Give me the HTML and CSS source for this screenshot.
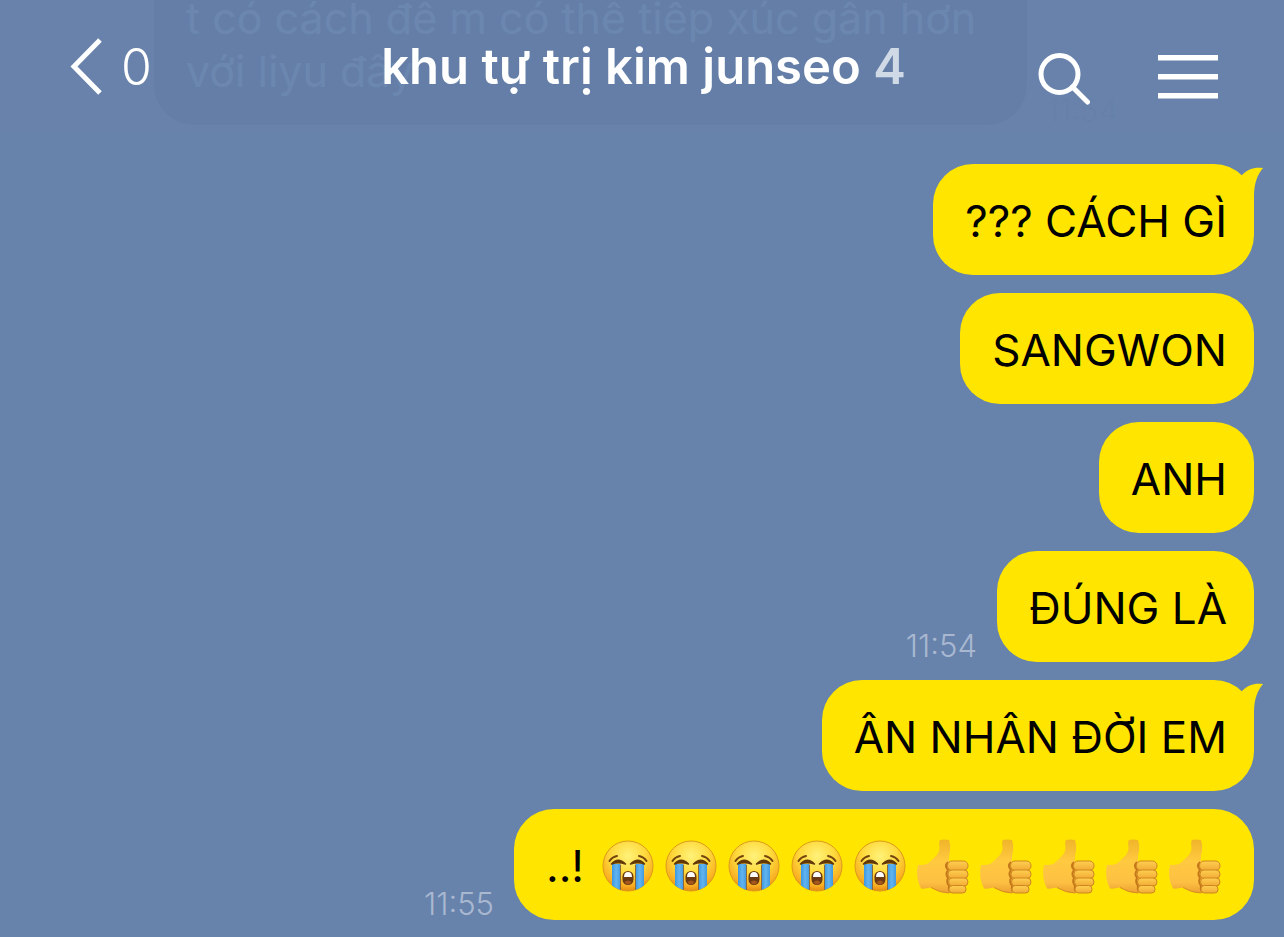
FILE: index.html
```html
<!DOCTYPE html>
<html lang="vi">
<head>
    <meta charset="UTF-8">
    <meta name="viewport" content="width=device-width, initial-scale=1.0">
    <title>khu tự trị kim junseo</title>
    <link rel="stylesheet" href="styles.css">
</head>
<body>
    <!-- shared shapes -->
    <svg class="defs" aria-hidden="true">
        <defs>
            <radialGradient id="faceFill" cx="0.5" cy="0.3" r="0.7">
                <stop offset="0" stop-color="#fff27a"/>
                <stop offset="0.5" stop-color="#ffd93b"/>
                <stop offset="0.85" stop-color="#f8ae22"/>
                <stop offset="1" stop-color="#e68a12"/>
            </radialGradient>
            <linearGradient id="tearFill" x1="0" y1="0" x2="1" y2="0">
                <stop offset="0" stop-color="#3c98e0"/>
                <stop offset="0.5" stop-color="#62b4f0"/>
                <stop offset="1" stop-color="#4199de"/>
            </linearGradient>
            <linearGradient id="handFill" x1="0" y1="0" x2="0" y2="1">
                <stop offset="0" stop-color="#f0b429"/>
                <stop offset="0.4" stop-color="#ffc940"/>
                <stop offset="0.8" stop-color="#fdc043"/>
                <stop offset="1" stop-color="#eda032"/>
            </linearGradient>
            <linearGradient id="fingerFill" x1="0" y1="0" x2="0" y2="1">
                <stop offset="0" stop-color="#ffcf52"/>
                <stop offset="1" stop-color="#f1ab35"/>
            </linearGradient>
            <symbol id="tail" viewBox="0 0 40 44">
                <path d="M19 11 C25 5 31 3 40 4 C34 11 31 20 31 32 L31 44 L8 44 L8 20 Z"/>
            </symbol>
            <symbol id="cry" viewBox="0 0 63 53">
                <circle cx="29" cy="26" r="25" fill="url(#faceFill)" stroke="#dd9a1c" stroke-width="1"/>
                <path d="M13 24 H21.500 V50 Q17 48.500 13 45.500 Z" fill="url(#tearFill)"/>
                <path d="M36.500 24 H45 V45.500 Q41 48.500 36.500 50 Z" fill="url(#tearFill)"/>
                <path d="M21.500 25 V50 M36.500 25 V50" stroke="#8a6a3c" stroke-width="1" fill="none"/>
                <path d="M10.500 21 Q13 17 18 16 M40 16 Q45 17 47.500 21" stroke="#75450f" stroke-width="2" stroke-linecap="round" fill="none"/>
                <path d="M12.500 24 Q19 16.500 26.500 24 Q19 21.500 12.500 24 Z M31.500 24 Q39 16.500 45.500 24 Q39 21.500 31.500 24 Z" fill="#633808" stroke="#633808" stroke-width="1.500" stroke-linejoin="round"/>
                <rect x="23.500" y="31" width="11" height="14" rx="5.500" fill="#6b3a12"/>
                <path d="M25 37 Q25 32 29 32 Q33 32 33 37 Z" fill="#fff"/>
                <path d="M25.500 42 Q29 39 32.500 42 Q31 44.500 29 44.500 Q27 44.500 25.500 42 Z" fill="#a5571d"/>
            </symbol>
            <symbol id="thumb" viewBox="0 0 63 53">
                <path d="M4 25 Q9 25.500 14 23.500 Q18 20 21 17 Q26 12 25.500 7 Q24.500 2 26 0 Q30 -1 35 0 Q37 5 36 11 Q34.500 16 35 21 L40 49 Q39 53 34 53 Q28 53 24 51 L17 47.500 Q11 49 7 48.500 Q1 37 4 25 Z" fill="url(#handFill)"/>
                <path d="M34 22 Q30 26 34 30 Q31 34 34 38 Q32 42 35 46 Q34 49 36 52" stroke="#c5781a" stroke-width="2" fill="none"/>
                <path d="M17 47.500 Q25 52.500 35 53" stroke="#d88b22" stroke-width="1" fill="none"/>
                <g fill="url(#fingerFill)" stroke="#cf861f" stroke-width="1">
                    <rect x="33.500" y="21" width="20.500" height="9.500" rx="4.500"/>
                    <rect x="34" y="30" width="20" height="8.500" rx="4"/>
                    <rect x="34.500" y="38" width="19.500" height="8" rx="4"/>
                    <rect x="35" y="45.500" width="17" height="7.500" rx="3.500"/>
                </g>
            </symbol>
        </defs>
    </svg>

    <header>
        <button type="button" class="back" aria-label="Back">
            <svg width="34" height="58" viewBox="0 0 34 58">
                <path d="M31 2 L5 28.500 L31 55" fill="none" stroke="currentColor" stroke-width="5"/>
            </svg>
            <span>0</span>
        </button>
        <h1>khu tự trị kim junseo <span class="members">4</span></h1>
        <div class="actions">
            <button type="button" aria-label="Search">
                <svg width="54" height="54" viewBox="0 0 54 54" fill="none" stroke="currentColor" stroke-width="5">
                    <circle cx="22.500" cy="23" r="18.500"/>
                    <path d="M35.500 36 L50.500 51" stroke-linecap="round"/>
                </svg>
            </button>
            <button type="button" aria-label="Menu">
                <svg width="60" height="46" viewBox="0 0 60 46" fill="currentColor">
                    <rect y="0" width="60" height="5.500"/>
                    <rect y="19" width="60" height="5.500"/>
                    <rect y="38" width="60" height="5.500"/>
                </svg>
            </button>
        </div>
    </header>

    <main class="chat">
        <div class="message received">
            <p class="bubble">t có cách để m có thể tiếp xúc gần hơn với liyu đây</p>
            <time>11:54</time>
        </div>
        <div class="message sent">
            <p class="bubble">??? CÁCH GÌ<svg class="tail" aria-hidden="true"><use href="#tail"/></svg></p>
        </div>
        <div class="message sent">
            <p class="bubble">SANGWON</p>
        </div>
        <div class="message sent">
            <p class="bubble">ANH</p>
        </div>
        <div class="message sent">
            <time>11:54</time>
            <p class="bubble">ĐÚNG LÀ</p>
        </div>
        <div class="message sent">
            <p class="bubble">ÂN NHÂN ĐỜI EM<svg class="tail" aria-hidden="true"><use href="#tail"/></svg></p>
        </div>
        <div class="message sent">
            <time>11:55</time>
            <p class="bubble with-emoji">
                <span>..!</span>
                <svg class="emoji"><use href="#cry"/></svg>
                <svg class="emoji"><use href="#cry"/></svg>
                <svg class="emoji"><use href="#cry"/></svg>
                <svg class="emoji"><use href="#cry"/></svg>
                <svg class="emoji"><use href="#cry"/></svg>
                <svg class="emoji"><use href="#thumb"/></svg>
                <svg class="emoji"><use href="#thumb"/></svg>
                <svg class="emoji"><use href="#thumb"/></svg>
                <svg class="emoji"><use href="#thumb"/></svg>
                <svg class="emoji"><use href="#thumb"/></svg>
            </p>
        </div>
    </main>
</body>
</html>
```
FILE: styles.css
```css
* {
    box-sizing: border-box;
}

body {
    margin: 0;
    font-family: 'Inter', 'Liberation Sans', sans-serif;
    background: #6783ac;
    color: #000;
}

.defs {
    position: absolute;
    width: 0;
    height: 0;
}

header {
    position: fixed;
    top: 0;
    left: 0;
    right: 0;
    z-index: 1;
    display: grid;
    grid-template-columns: 1fr auto 1fr;
    align-items: center;
    height: 132px;
    padding: 2px 66px 0 69px;
    background: rgba(104, 130, 171, 0.93);
    color: #fff;
}

header h1 {
    margin: 0;
    font-size: 49px;
    font-weight: 600;
    line-height: 60px;
    white-space: nowrap;
}

.members {
    color: #d0d9e6;
}

header button {
    display: flex;
    align-items: center;
    padding: 0;
    border: none;
    background: none;
    color: inherit;
    font-family: inherit;
    cursor: pointer;
}

.back {
    justify-self: start;
    gap: 18px;
    font-size: 50px;
    font-weight: 300;
    line-height: 60px;
}

.actions {
    display: flex;
    justify-content: flex-end;
    align-items: center;
    gap: 67px;
    padding-top: 22px;
}

.chat {
    display: flex;
    flex-direction: column;
    justify-content: flex-end;
    gap: 18px;
    height: 100vh;
    padding: 0 30px 17px;
    overflow: hidden;
}

.message {
    display: flex;
    flex-shrink: 0;
    align-items: flex-end;
    gap: 20px;
}

.sent {
    justify-content: flex-end;
}

.bubble {
    position: relative;
    margin: 0;
    padding: 31px 27px 27px 32px;
    border-radius: 40px;
    background: #ffe500;
    font-size: 44px;
    line-height: 53px;
}

.tail {
    position: absolute;
    top: 0;
    right: -9px;
    width: 40px;
    height: 44px;
    fill: #ffe500;
}

time {
    color: #a9b8d0;
    font-size: 31px;
    font-weight: 300;
    line-height: 32px;
}

.with-emoji {
    display: flex;
    padding-right: 25px;
}

.with-emoji span {
    margin-right: 15px;
}

.emoji {
    width: 63px;
    height: 53px;
    overflow: visible;
}

.emoji use,
symbol {
    overflow: visible;
}

.received {
    margin: 0 136px 21px 124px;
}

.received .bubble {
    flex: 1;
    background: #2a506c;
    color: #8dbee6;
    font-size: 43px;
}

.received time {
    color: #3f6390;
    line-height: 28px;
}
```
